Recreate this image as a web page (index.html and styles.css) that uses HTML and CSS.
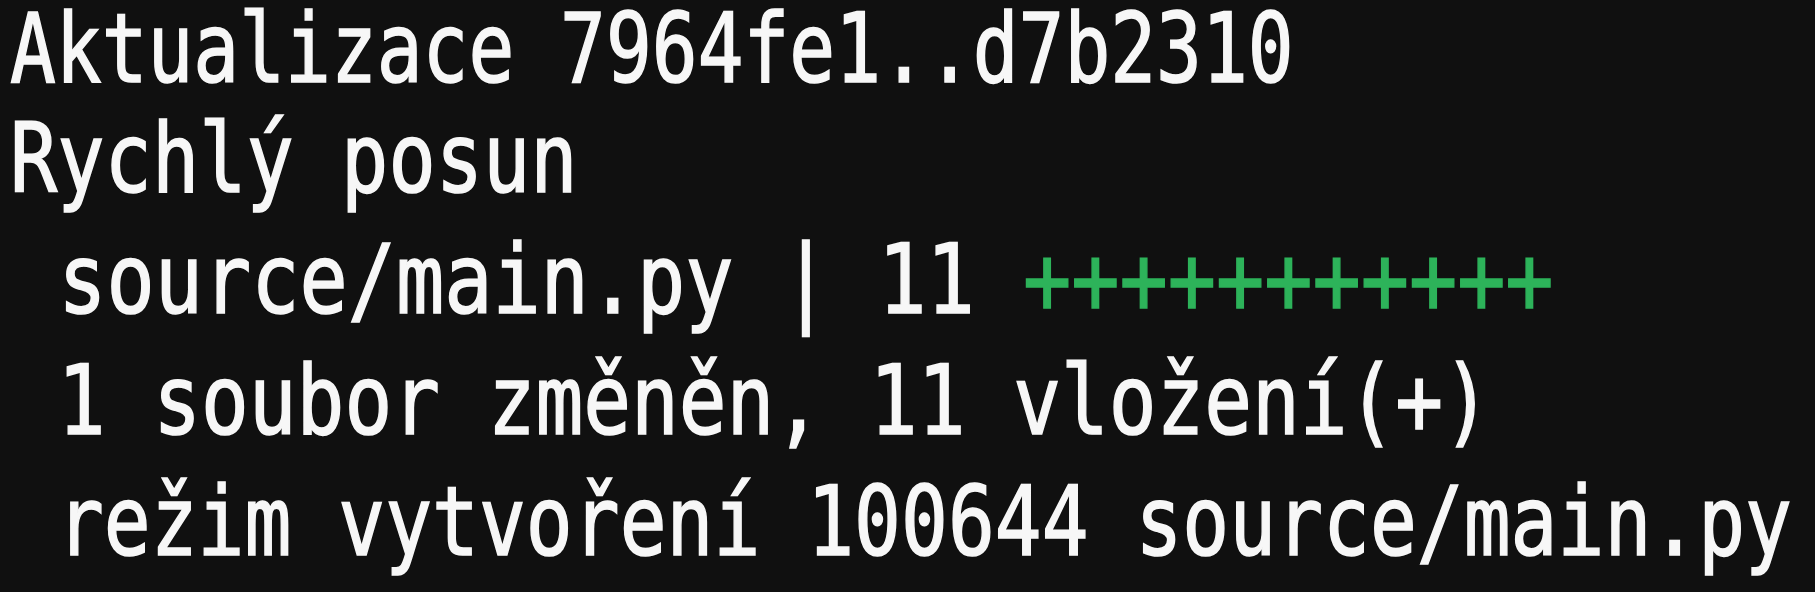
FILE: index.html
```html
<!DOCTYPE html>
<html lang="cs">
<head>
<meta charset="utf-8">
<title>git pull</title>
<link rel="stylesheet" href="styles.css">
</head>
<body>
<div class="term">
  <div class="line l1">Aktualizace 7964fe1..d7b2310</div>
  <div class="line l2">Rychlý posun</div>
  <div class="line l3"> source/main.py | 11 <span class="add">+++++++++++</span></div>
  <div class="line l4"> 1 soubor změněn, 11 vložení(+)</div>
  <div class="line l5"> režim vytvoření 100644 source/main.py</div>
</div>
</body>
</html>
```

FILE: styles.css
```css
html, body {
  margin: 0;
  padding: 0;
  background: #101010;
  width: 1815px;
  height: 592px;
  overflow: hidden;
}

.term {
  padding-left: 10px;
  font-family: "DejaVu Sans Mono", "Liberation Mono", monospace;
  font-size: 97px;
  font-weight: normal;
  line-height: 121px;
  color: #f7f7f7;
  -webkit-text-stroke: 1.6px #f7f7f7;
}

.line {
  white-space: pre;
  transform-origin: 0 50%;
  transform: scaleX(0.815);
}

.l1 { line-height: 98px; transform: scaleX(0.785); }
.l2 { transform: scaleX(0.81); }
.l3 { transform: scaleX(0.826); }
.l4 { transform: scaleX(0.818); }
.l5 { transform: scaleX(0.803); }

.add {
  color: #2db35a;
  -webkit-text-stroke: 1.6px #2db35a;
}
```
